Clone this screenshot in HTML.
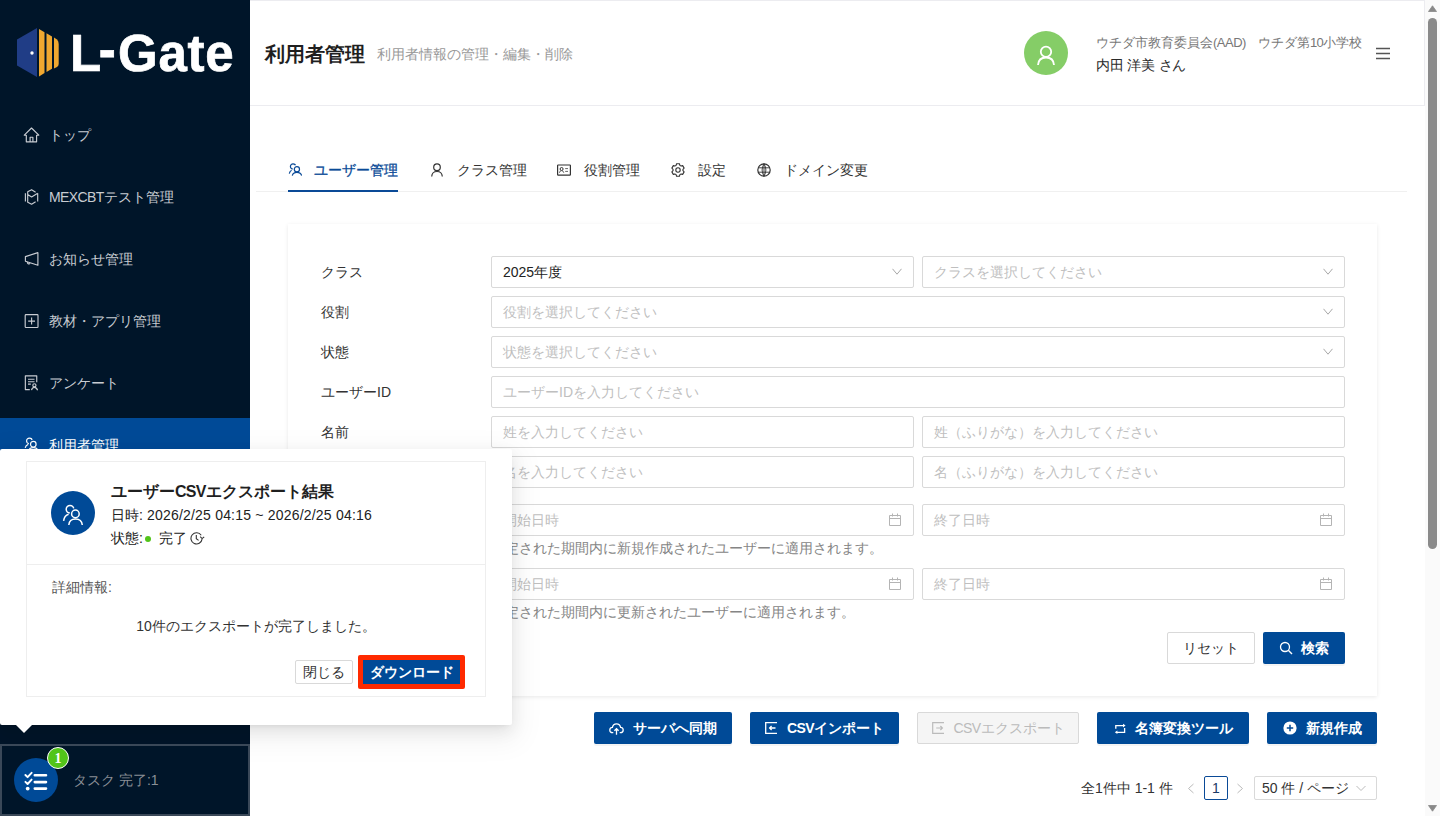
<!DOCTYPE html>
<html><head><meta charset="utf-8">
<style>
*{box-sizing:border-box;margin:0;padding:0}
html,body{width:1440px;height:816px;overflow:hidden;background:#fff;font-family:"Liberation Sans",sans-serif;color:#222}
.abs{position:absolute}
#side{position:absolute;left:0;top:0;width:250px;height:816px;background:#001529}
.logo-text{position:absolute;left:70px;top:24px;font-size:51px;font-weight:bold;color:#fff;letter-spacing:0.7px;line-height:60px;-webkit-text-stroke:0.7px #fff}
.hy{display:inline-block;position:relative;left:-3px;top:-5.5px;transform:scaleY(1.1);margin-right:-1.5px}
.mi{position:absolute;left:0;width:250px;height:54px;color:#c8ccd2;font-size:14px}
.mi .ic{position:absolute;left:23px;top:18.5px;width:17px;height:17px}
.mi .tx{position:absolute;left:49px;top:0;line-height:54px}
.mi.sel{background:#004a97;color:#fff}
#header{position:absolute;left:250px;top:0;width:1175px;height:106px;border:1px solid #ececf0;border-left:none;background:#fff}
.title{position:absolute;left:265px;top:41px;font-size:20px;font-weight:bold;color:#1f1f1f;line-height:26px}
.subtitle{position:absolute;left:377px;top:44px;font-size:14px;color:#999;line-height:20px}
.avatar{position:absolute;left:1024px;top:31px;width:44px;height:44px;border-radius:50%;background:#85cd67}
.org{position:absolute;left:1096px;top:33px;font-size:13px;color:#777;line-height:20px}
.uname{position:absolute;left:1096px;top:55px;font-size:14px;color:#2a2a2a;line-height:20px;letter-spacing:-0.2px}
.tabs{position:absolute;left:256px;top:191px;width:1151px;height:1px;background:#f0f0f0}
.tab{position:absolute;top:160px;font-size:14px;line-height:20px;color:#333}
.tab.act{color:#0a4a97;-webkit-text-stroke:0.3px #0a4a97}
.tab svg{position:absolute;top:3px}
.card{position:absolute;left:288px;top:224px;width:1089px;height:472px;background:#fff;box-shadow:0 1px 4px rgba(0,0,0,0.09)}
.lbl{position:absolute;left:321px;font-size:14px;color:#333;line-height:20px}
.inp{position:absolute;height:32px;border:1px solid #d9d9d9;border-radius:2px;background:#fff;font-size:14px;color:#bfbfbf;line-height:30px;padding-left:11px}
.inp.val{color:#222}
.chev{position:absolute;right:11px;top:11px}
.cal{position:absolute;right:12px;top:8px}
.hint{position:absolute;left:491px;font-size:14px;color:#858585;line-height:20px}
.btn{position:absolute;height:32px;border-radius:2px;font-size:14px;line-height:32px;text-align:center}
.btn.pri{background:#004a97;color:#fff;font-weight:bold;box-shadow:0 2px 0 rgba(0,0,0,0.045)}
.btn.def{background:#fff;border:1px solid #d9d9d9;color:#333;line-height:30px}
.btn.dis{background:#f5f5f5;border:1px solid #d9d9d9;color:#bbb;line-height:30px}
.btn svg{vertical-align:middle;margin-right:8px;position:relative;top:-1px}
#scroll{position:absolute;left:1425px;top:0;width:15px;height:816px;background:#fafafa}
#popup{position:absolute;left:0;top:449px;width:512px;height:276px;background:#fff;border-radius:2px;box-shadow:0 3px 6px -4px rgba(0,0,0,.12),0 6px 16px 0 rgba(0,0,0,.08),0 9px 28px 8px rgba(0,0,0,.05)}
.pcard{position:absolute;left:26px;top:12px;width:460px;height:236px;border:1px solid #eeeeee}
</style></head>
<body>
<div id="side">
  <svg class="abs" style="left:16px;top:28px" width="44" height="50" viewBox="0 0 44 50">
    <path d="M21 0 L21 49 L1 37.5 L1 11.5 Z" fill="#203d86"/>
    <circle cx="16" cy="25" r="1.7" fill="#fff"/>
    <path d="M23 1 L28.5 4.3 L28.5 45 L23 48.5 Z" fill="#f0a830"/>
    <path d="M30.5 5.3 L36 8.6 L36 40.8 L30.5 44 Z" fill="#f0a830"/>
    <path d="M38 9.6 L41 11.5 Q42.7 13 42.7 16 L42.7 36 Q42.7 38 41 39 L38 40.6 Z" fill="#f0a830"/>
  </svg>
  <div class="logo-text">L<span class="hy">-</span>Gate</div>
  <div class="mi" style="top:108px"><svg class="ic" viewBox="0 0 17 17"><path d="M1.3 8.2 L8.5 1 L15.8 8.2 H13.6 V14.8 H3.3 V8.2 Z M7.1 14.8 V10.2 H9.9 V14.8" fill="none" stroke="#c8ccd2" stroke-width="1.15" stroke-linejoin="round"/></svg><span class="tx">トップ</span></div>
  <div class="mi" style="top:170px"><svg class="ic" viewBox="0 0 17 17"><path d="M2.4 4.2 V12.5 M14.7 4.3 V12.5 M12.6 3.2 L8.6 0.7 L4.7 2.8 V13.2 L8.6 15.2 L12.6 12.8 M4.7 5.6 L8.6 7.9 L14.7 4.3" fill="none" stroke="#c8ccd2" stroke-width="1.15" stroke-linejoin="round"/></svg><span class="tx"><span style="letter-spacing:-0.6px">MEXCBT</span>テスト管理</span></div>
  <div class="mi" style="top:232px"><svg class="ic" viewBox="0 0 17 17"><path d="M2.4 5.6 L14.9 1.6 V14.3 L2.4 10.2 Z" fill="none" stroke="#c8ccd2" stroke-width="1.15" stroke-linejoin="round"/><path d="M4.6 10.9 A1.35 1.35 0 1 0 7 12.2" fill="none" stroke="#c8ccd2" stroke-width="1.15" stroke-linejoin="round"/></svg><span class="tx">お知らせ管理</span></div>
  <div class="mi" style="top:294px"><svg class="ic" viewBox="0 0 17 17"><rect x="2.2" y="1.6" width="12.8" height="12.9" rx="0.8" fill="none" stroke="#c8ccd2" stroke-width="1.15" stroke-linejoin="round"/><path d="M8.6 4.6 V11.5 M5.2 8.05 H12" fill="none" stroke="#c8ccd2" stroke-width="1.15" stroke-linejoin="round"/></svg><span class="tx">教材・アプリ管理</span></div>
  <div class="mi" style="top:356px"><svg class="ic" viewBox="0 0 17 17"><path d="M6.8 14.6 H2.35 V0.8 H13.75 V7.3 M5 4.2 H11.5 M5 6.7 H11.5 M5 9.1 H7.8" fill="none" stroke="#c8ccd2" stroke-width="1.15" stroke-linejoin="round"/><circle cx="11.4" cy="10.3" r="1.6" fill="none" stroke="#c8ccd2" stroke-width="1.15" stroke-linejoin="round"/><path d="M8.5 15.2 Q9.3 12.3 11.4 12.3 Q13.5 12.3 14.6 15.2" fill="none" stroke="#c8ccd2" stroke-width="1.15" stroke-linejoin="round"/></svg><span class="tx">アンケート</span></div>
  <div class="mi sel" style="top:418px"><svg class="ic" viewBox="0 0 17 17"><circle cx="6.4" cy="3.9" r="2.8" fill="none" stroke="#fff" stroke-width="1.2"/><path d="M2.2 10.9 Q2.8 8.2 5.3 7.4" fill="none" stroke="#fff" stroke-width="1.2"/><circle cx="10.3" cy="7.25" r="2.8" fill="#004a97" stroke="#004a97" stroke-width="3.5"/><path d="M6 13.2 Q6.5 10.6 10.3 10.6 Q14.1 10.6 14.6 13.2" fill="none" stroke="#004a97" stroke-width="3.5"/><circle cx="10.3" cy="7.25" r="2.8" fill="none" stroke="#fff" stroke-width="1.2"/><path d="M6 13.2 Q6.5 10.6 10.3 10.6 Q14.1 10.6 14.6 13.2" fill="none" stroke="#fff" stroke-width="1.2"/></svg><span class="tx">利用者管理</span></div>
</div>

<div id="header"></div>
<div class="title">利用者管理</div>
<div class="subtitle">利用者情報の管理・編集・削除</div>
<div class="avatar"><svg class="abs" style="left:12px;top:13.5px" width="20" height="22" viewBox="0 0 20 22"><circle cx="10" cy="6.8" r="5.2" fill="none" stroke="#fff" stroke-width="1.8"/><path d="M2 20 Q2.5 12.5 10 12.5 Q17.5 12.5 18 20" fill="none" stroke="#fff" stroke-width="1.8"/></svg></div>
<div class="org">ウチダ市教育委員会<span style="letter-spacing:-0.5px">(AAD)</span><span style="display:inline-block;width:12px"></span>ウチダ第<span style="letter-spacing:-0.5px">10</span>小学校</div>
<div class="uname">内田 洋美 さん</div>
<svg class="abs" style="left:1376px;top:47px" width="14" height="13" viewBox="0 0 14 13"><path d="M0 1.5 H14 M0 6.5 H14 M0 11.5 H14" stroke="#555" stroke-width="1.6"/></svg>

<div id="scroll">
  <svg class="abs" style="left:3px;top:5px" width="9" height="7"><path d="M0.5 6.5 L4.5 0.8 L8.5 6.5 Z" fill="#888" stroke="#888" stroke-width="0.8" stroke-linejoin="round"/></svg>
  <div class="abs" style="left:3px;top:18px;width:9px;height:531px;border-radius:4.5px;background:#8a8a8a"></div>
  <svg class="abs" style="left:3px;top:805px" width="9" height="7"><path d="M0.5 0.5 L4.5 6.2 L8.5 0.5 Z" fill="#888" stroke="#888" stroke-width="0.8" stroke-linejoin="round"/></svg>
</div>

<!-- tabs -->
<div class="tabs"></div>
<div class="abs" style="left:288px;top:190px;width:110px;height:2px;background:#0a4a97"></div>
<div class="tab act" style="left:314px">ユーザー管理</div>
<div class="tab" style="left:457px">クラス管理</div>
<div class="tab" style="left:584px">役割管理</div>
<div class="tab" style="left:698px">設定</div>
<div class="tab" style="left:784px">ドメイン変更</div>
<svg class="abs" style="left:288px;top:163px" width="14" height="14" viewBox="0 0 14 14"><circle cx="5" cy="3.4" r="2.6" fill="none" stroke="#0a4a97" stroke-width="1.2"/><path d="M1.3 10.6 Q1.8 8 3.6 7.2" fill="none" stroke="#0a4a97" stroke-width="1.2"/><circle cx="8.9" cy="6.15" r="2.6" fill="#fff" stroke="#fff" stroke-width="3"/><path d="M4.3 12.6 Q5 9.4 8.9 9.4 Q12.8 9.4 13.6 12.6" fill="none" stroke="#fff" stroke-width="3"/><circle cx="8.9" cy="6.15" r="2.6" fill="none" stroke="#0a4a97" stroke-width="1.2"/><path d="M4.3 12.6 Q5 9.4 8.9 9.4 Q12.8 9.4 13.6 12.6" fill="none" stroke="#0a4a97" stroke-width="1.2"/></svg>
<svg class="abs" style="left:431px;top:163px" width="12" height="14" viewBox="0 0 12 14"><circle cx="6" cy="4.2" r="3.3" fill="none" stroke="#333" stroke-width="1.2"/><path d="M0.7 13.5 Q1 8.5 6 8.5 Q11 8.5 11.3 13.5" fill="none" stroke="#333" stroke-width="1.2"/></svg>
<svg class="abs" style="left:557px;top:164px" width="14" height="12" viewBox="0 0 14 12"><rect x="0.6" y="1" width="12.8" height="10.2" rx="0.6" fill="none" stroke="#333" stroke-width="1.2"/><circle cx="4.6" cy="5" r="1.5" fill="none" stroke="#333" stroke-width="1"/><path d="M2.4 8.8 Q2.8 6.6 4.6 6.6 Q6.4 6.6 6.8 8.8 M8.2 4.6 H11 M8.2 7.4 H11" fill="none" stroke="#555" stroke-width="0.9"/></svg>
<svg class="abs" style="left:671px;top:163px" width="14" height="14" viewBox="0 0 14 14"><circle cx="7" cy="7" r="2.2" fill="none" stroke="#333" stroke-width="1.1"/><path d="M5.13 2.36 L5.56 0.76 L8.44 0.76 L8.87 2.36 L10.08 3.06 L11.68 2.64 L13.12 5.13 L11.95 6.30 L11.95 7.70 L13.12 8.87 L11.68 11.36 L10.08 10.94 L8.87 11.64 L8.44 13.24 L5.56 13.24 L5.13 11.64 L3.92 10.94 L2.32 11.36 L0.88 8.87 L2.05 7.70 L2.05 6.30 L0.88 5.13 L2.32 2.64 L3.92 3.06 Z" fill="none" stroke="#333" stroke-width="1.1" stroke-linejoin="round"/></svg>
<svg class="abs" style="left:757px;top:163px" width="14" height="14" viewBox="0 0 14 14"><circle cx="7" cy="7" r="6.2" fill="none" stroke="#333" stroke-width="1.2"/><path d="M7 0.8 Q3.2 7 7 13.2 M7 0.8 Q10.8 7 7 13.2 M7 0.8 V13.2 M1.2 4.8 H12.8 M1.2 9.2 H12.8" fill="none" stroke="#333" stroke-width="0.9"/></svg>

<!-- card -->
<div class="card"></div>

<!-- form -->
<div class="lbl" style="top:262px">クラス</div>
<div class="inp val" style="left:491px;top:256px;width:423px">2025年度<svg class="chev" width="10" height="7" viewBox="0 0 10 7"><path d="M0.5 0.8 L5 6.2 L9.5 0.8" fill="none" stroke="#a8a8a8" stroke-width="1"/></svg></div>
<div class="inp" style="left:922px;top:256px;width:423px">クラスを選択してください<svg class="chev" width="10" height="7" viewBox="0 0 10 7"><path d="M0.5 0.8 L5 6.2 L9.5 0.8" fill="none" stroke="#a8a8a8" stroke-width="1"/></svg></div>
<div class="lbl" style="top:302px">役割</div>
<div class="inp" style="left:491px;top:296px;width:854px">役割を選択してください<svg class="chev" width="10" height="7" viewBox="0 0 10 7"><path d="M0.5 0.8 L5 6.2 L9.5 0.8" fill="none" stroke="#a8a8a8" stroke-width="1"/></svg></div>
<div class="lbl" style="top:342px">状態</div>
<div class="inp" style="left:491px;top:336px;width:854px">状態を選択してください<svg class="chev" width="10" height="7" viewBox="0 0 10 7"><path d="M0.5 0.8 L5 6.2 L9.5 0.8" fill="none" stroke="#a8a8a8" stroke-width="1"/></svg></div>
<div class="lbl" style="top:382px">ユーザーID</div>
<div class="inp" style="left:491px;top:376px;width:854px">ユーザーIDを入力してください</div>
<div class="lbl" style="top:422px">名前</div>
<div class="inp" style="left:491px;top:416px;width:423px">姓を入力してください</div>
<div class="inp" style="left:922px;top:416px;width:423px">姓（ふりがな）を入力してください</div>
<div class="inp" style="left:491px;top:456px;width:423px">名を入力してください</div>
<div class="inp" style="left:922px;top:456px;width:423px">名（ふりがな）を入力してください</div>
<div class="lbl" style="top:510px">作成日時</div>
<div class="inp" style="left:491px;top:504px;width:423px">開始日時<svg class="cal" width="12" height="13" viewBox="0 0 12 13"><path d="M0.5 2.5 H11.5 V12.5 H0.5 Z M0.5 5.5 H11.5 M3.5 0.5 V3.5 M8.5 0.5 V3.5" fill="none" stroke="#b4b4b4" stroke-width="1"/></svg></div>
<div class="inp" style="left:922px;top:504px;width:423px">終了日時<svg class="cal" width="12" height="13" viewBox="0 0 12 13"><path d="M0.5 2.5 H11.5 V12.5 H0.5 Z M0.5 5.5 H11.5 M3.5 0.5 V3.5 M8.5 0.5 V3.5" fill="none" stroke="#b4b4b4" stroke-width="1"/></svg></div>
<div class="hint" style="top:538px">指定された期間内に新規作成されたユーザーに適用されます。</div>
<div class="lbl" style="top:574px">更新日時</div>
<div class="inp" style="left:491px;top:568px;width:423px">開始日時<svg class="cal" width="12" height="13" viewBox="0 0 12 13"><path d="M0.5 2.5 H11.5 V12.5 H0.5 Z M0.5 5.5 H11.5 M3.5 0.5 V3.5 M8.5 0.5 V3.5" fill="none" stroke="#b4b4b4" stroke-width="1"/></svg></div>
<div class="inp" style="left:922px;top:568px;width:423px">終了日時<svg class="cal" width="12" height="13" viewBox="0 0 12 13"><path d="M0.5 2.5 H11.5 V12.5 H0.5 Z M0.5 5.5 H11.5 M3.5 0.5 V3.5 M8.5 0.5 V3.5" fill="none" stroke="#b4b4b4" stroke-width="1"/></svg></div>
<div class="hint" style="top:602px">指定された期間内に更新されたユーザーに適用されます。</div>
<div class="btn def" style="left:1167px;top:632px;width:88px">リセット</div>
<div class="btn pri" style="left:1263px;top:632px;width:82px"><svg width="14" height="14" viewBox="0 0 14 14"><circle cx="6" cy="6" r="4.5" fill="none" stroke="#fff" stroke-width="1.3"/><path d="M9.3 9.3 L13 13" stroke="#fff" stroke-width="1.4"/></svg>検索</div>

<div class="btn pri" style="left:594px;top:712px;width:138px"><svg width="15" height="12" viewBox="0 0 15 12" style="margin-right:9px;top:0"><path d="M4.3 9.6 H3.6 Q0.8 9.6 0.8 6.9 Q0.8 4.5 3.4 4.3 Q4.1 0.8 7.5 0.8 Q10.9 0.8 11.6 4.3 Q14.2 4.5 14.2 6.9 Q14.2 9.6 11.4 9.6 H10.7" fill="none" stroke="#fff" stroke-width="1.3"/><path d="M7.5 11.8 V5.8 M5.4 7.8 L7.5 5.7 L9.6 7.8" fill="none" stroke="#fff" stroke-width="1.3"/></svg>サーバへ同期</div>
<div class="btn pri" style="left:750px;top:712px;width:149px"><svg width="12" height="12" viewBox="0 0 12 12" style="margin-right:10px"><path d="M12 0.7 H0.7 V11.3 H12 M4.6 6 H10.5 M6.6 4 L4.6 6 L6.6 8" fill="none" stroke="#fff" stroke-width="1.3"/></svg><span style="letter-spacing:-0.6px">CSV</span>インポート</div>
<div class="btn dis" style="left:917px;top:712px;width:162px"><svg width="12" height="12" viewBox="0 0 12 12" style="margin-right:10px"><path d="M12 0.7 H0.7 V11.3 H12 M4.2 6 H10.4 M8.4 4 L10.4 6 L8.4 8" fill="none" stroke="#bbb" stroke-width="1.2"/></svg><span style="letter-spacing:-0.6px">CSV</span>エクスポート</div>
<div class="btn pri" style="left:1097px;top:712px;width:152px"><svg width="12" height="13" viewBox="0 0 12 13" style="margin-right:9px"><path d="M1.8 6.8 V3.6 H9.4 M10.6 6.1 V10.3 H3" fill="none" stroke="#fff" stroke-width="1.3"/><path d="M9 1.8 L11.6 3.6 L9 5.4 Z M3.4 8.5 L0.8 10.3 L3.4 12.1 Z" fill="#fff"/></svg>名簿変換ツール</div>
<div class="btn pri" style="left:1267px;top:712px;width:110px"><svg width="14" height="14" viewBox="0 0 14 14" style="margin-right:9px"><circle cx="7" cy="7" r="6.6" fill="#fff"/><path d="M7 3.8 V10.2 M3.8 7 H10.2" stroke="#004a97" stroke-width="1.5"/></svg>新規作成</div>

<div class="abs" style="left:1081px;top:778px;font-size:14px;line-height:20px;color:#333">全1件中 1-1 件</div>
<svg class="abs" style="left:1187px;top:783px" width="8" height="11" viewBox="0 0 8 11"><path d="M6.5 1 L1.5 5.5 L6.5 10" fill="none" stroke="#bbb" stroke-width="1"/></svg>
<div class="abs" style="left:1204px;top:776px;width:24px;height:24px;border:1px solid #0a4a97;border-radius:2px;font-size:14px;line-height:22px;text-align:center;color:#1b3a66">1</div>
<svg class="abs" style="left:1236px;top:783px" width="8" height="11" viewBox="0 0 8 11"><path d="M1.5 1 L6.5 5.5 L1.5 10" fill="none" stroke="#bbb" stroke-width="1"/></svg>
<div class="abs" style="left:1254px;top:776px;width:123px;height:24px;border:1px solid #d9d9d9;border-radius:2px;font-size:14px;line-height:22px;color:#333;padding-left:7px">50 件 / ページ<svg class="abs" style="right:10px;top:8px" width="10" height="7" viewBox="0 0 10 7"><path d="M0.5 1 L5 5.5 L9.5 1" fill="none" stroke="#bbb" stroke-width="1"/></svg></div>
<div id="popup">
  <div class="pcard"></div>
  <div class="abs" style="left:51px;top:42px;width:44px;height:44px;border-radius:50%;background:#004a97"><svg class="abs" style="left:11px;top:9px" width="24" height="26" viewBox="0 0 24 26"><circle cx="8" cy="9.2" r="3.8" fill="none" stroke="#fff" stroke-width="1.5"/><path d="M1.6 20.8 Q2.3 15.6 6.6 14.2" fill="none" stroke="#fff" stroke-width="1.5"/><circle cx="13.4" cy="13.9" r="3.8" fill="#004a97" stroke="#004a97" stroke-width="4"/><path d="M6.8 25 Q7.3 19 13.5 19 Q19.7 19 20.3 25" fill="none" stroke="#004a97" stroke-width="4"/><circle cx="13.4" cy="13.9" r="3.8" fill="none" stroke="#fff" stroke-width="1.5"/><path d="M6.8 25 Q7.3 19 13.5 19 Q19.7 19 20.3 25" fill="none" stroke="#fff" stroke-width="1.5"/></svg></div>
  <div class="abs" style="left:111px;top:32px;font-size:16px;font-weight:bold;line-height:22px;color:#1f1f1f">ユーザー<span style="letter-spacing:-0.7px">CSV</span>エクスポート結果</div>
  <div class="abs" style="left:111px;top:56px;font-size:14px;line-height:20px;color:#222">日時:<span style="letter-spacing:0.2px"> 2026/2/25 04:15 ~ 2026/2/25 04:16</span></div>
  <div class="abs" style="left:111px;top:79px;font-size:14px;line-height:20px;color:#222">状態:</div>
  <div class="abs" style="left:145px;top:86.7px;width:6px;height:6px;border-radius:50%;background:#52c41a"></div>
  <div class="abs" style="left:159px;top:79px;font-size:14px;line-height:20px;color:#222">完了</div>
  <svg class="abs" style="left:190px;top:83px" width="15" height="13" viewBox="0 0 15 13"><path d="M12.1 7.2 A5.6 5.6 0 1 1 11.2 3.2" fill="none" stroke="#333" stroke-width="1.1"/><path d="M10.2 4.6 L12.1 6.6 L14.2 4.8" fill="none" stroke="#333" stroke-width="1.1"/><path d="M6.3 3 V6.8 L8.6 8.4" fill="none" stroke="#333" stroke-width="1.1"/></svg>
  <div class="abs" style="left:27px;top:115px;width:458px;height:1px;background:#eeeeee"></div>
  <div class="abs" style="left:52px;top:128px;font-size:14px;line-height:20px;color:#555">詳細情報:</div>
  <div class="abs" style="left:27px;top:167px;width:458px;text-align:center;font-size:14px;line-height:20px;color:#333">10件のエクスポートが完了しました。</div>
  <div class="abs" style="left:295px;top:211px;width:58px;height:24px;border:1px solid #d9d9d9;border-radius:2px;font-size:14px;line-height:22px;text-align:center;color:#333">閉じる</div>
  <div class="abs" style="left:358px;top:206px;width:107px;height:34px;background:#ff2a00;border-radius:2px"></div>
  <div class="abs" style="left:363px;top:211px;width:97px;height:24px;background:#004a97;font-size:14px;font-weight:bold;line-height:24px;text-align:center;color:#fff">ダウンロード</div>
</div>
<svg class="abs" style="left:15px;top:724px" width="18" height="9" viewBox="0 0 18 9"><path d="M0 0 L9 9 L18 0 Z" fill="#fff"/></svg>
<div class="abs" style="left:0;top:744px;width:250px;height:72px;border:2px solid #3a4858;background:#001529"></div>
<div class="abs" style="left:14px;top:758px;width:44px;height:44px;border-radius:50%;background:#004a97"><svg class="abs" style="left:10px;top:12px" width="24" height="22" viewBox="0 0 24 22"><path d="M1.4 5 L3.6 7.2 L7.6 2.8 M1.4 11.8 L3.6 14 L7.6 9.6" fill="none" stroke="#fff" stroke-width="1.9" stroke-linecap="round" stroke-linejoin="round"/><circle cx="3.7" cy="18.6" r="1.9" fill="#fff"/><path d="M10.8 5.2 H22 M10.8 12.1 H22 M10.8 18.6 H22" stroke="#fff" stroke-width="2.6" stroke-linecap="round"/></svg></div>
<div class="abs" style="left:47px;top:747px;width:22px;height:22px;border-radius:50%;background:#52c41a;border:1.5px solid #fff;font-size:14px;font-family:'Liberation Serif',serif;font-weight:bold;line-height:21px;text-align:center;color:#fff">1</div>
<div class="abs" style="left:73px;top:770px;font-size:14px;line-height:20px;color:#8a8f96">タスク 完了:1</div>

</body></html>
